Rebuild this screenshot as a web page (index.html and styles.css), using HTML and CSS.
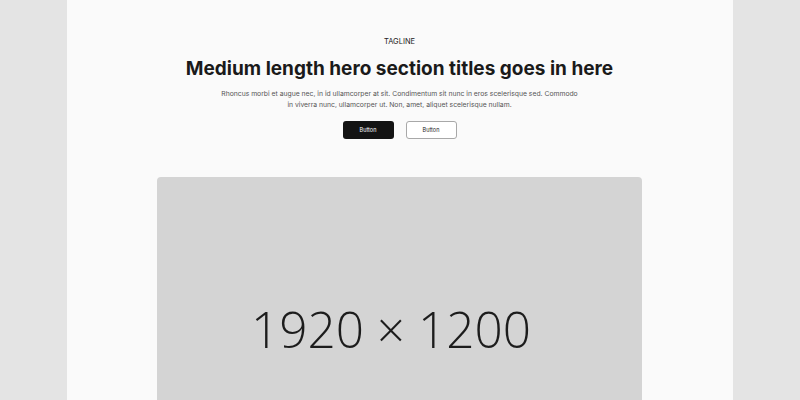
FILE: index.html
```html
<!DOCTYPE html>
<html>
<head>
<meta charset="utf-8">
<link rel="stylesheet" href="styles.css">
</head>
<body>
<main class="page">
  <section class="hero">
    <p class="tagline">TAGLINE</p>
    <h1 class="title">Medium length hero section titles goes in here</h1>
    <p class="lead">Rhoncus morbi et augue nec, in id ullamcorper at sit. Condimentum sit nunc in eros scelerisque sed. Commodo in viverra nunc, ullamcorper ut. Non, amet, aliquet scelerisque nullam.</p>
    <div class="actions">
      <a class="btn btn-primary">Button</a>
      <a class="btn btn-secondary">Button</a>
    </div>
  </section>
  <div class="media">
    <span class="media-label">1920 × 1200</span>
  </div>
</main>
</body>
</html>
```
FILE: styles.css
```css
* { box-sizing: border-box; }
html, body { margin: 0; padding: 0; }
body {
  background: #e4e4e4;
  font-family: Inter, "Noto Sans", sans-serif;
  color: #1a1a1a;
  height: 400px;
  overflow: hidden;
}
.page {
  width: 666px;
  margin: 0 auto;
  background: #fafafa;
  min-height: 400px;
  padding: 37px 91px 0 90px;
}
.hero {
  display: flex;
  flex-direction: column;
  align-items: center;
  text-align: center;
}
.tagline {
  margin: 0;
  font-size: 7.5px;
  line-height: 10px;
  font-weight: 400;
  color: #222;
}
.title {
  margin: 10px 0 0;
  font-size: 19px;
  line-height: 24px;
  font-weight: 700;
  color: #1a1a1a;
  white-space: nowrap;
}
.lead {
  margin: 7px 0 0;
  font-size: 6.8px;
  line-height: 11px;
  color: #555;
  max-width: 362px;
}
.actions {
  display: flex;
  gap: 12px;
  margin-top: 11px;
}
.btn {
  display: flex;
  align-items: center;
  justify-content: center;
  width: 51px;
  height: 18px;
  border-radius: 3px;
  font-size: 5.5px;
  font-weight: 400;
}
.btn-primary {
  background: #131313;
  color: #fff;
}
.btn-secondary {
  background: #fff;
  border: 1px solid #a8a8a8;
  color: #222;
}
.media {
  margin-top: 38px;
  height: 303px;
  background: #d4d4d4;
  border-radius: 4px;
  display: flex;
  align-items: center;
  justify-content: center;
}
.media-label {
  font-family: "Open Sans", sans-serif;
  font-weight: 300;
  font-size: 49.5px;
  color: #1c1c1c;
  margin-right: 17px;
}
```
